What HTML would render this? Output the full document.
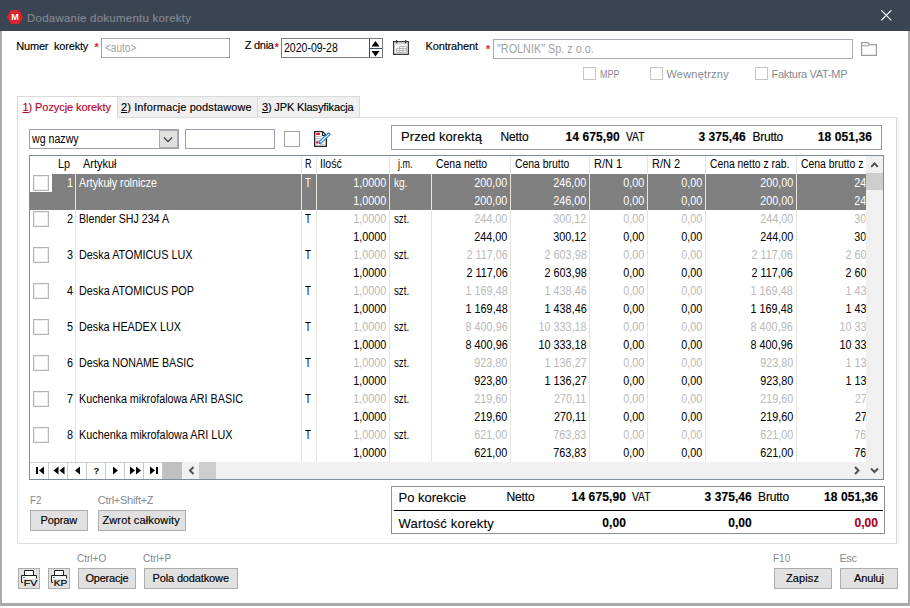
<!DOCTYPE html><html lang="pl"><head><meta charset="utf-8"><title>Dodawanie dokumentu korekty</title><style>*{box-sizing:border-box;margin:0;padding:0}
html,body{width:910px;height:608px;overflow:hidden;background:#fff}
body{position:relative;font-family:"Liberation Sans",sans-serif;font-size:11px;color:#000;line-height:13px}
body>*{position:absolute}
.t{white-space:nowrap;font-size:11px;line-height:13px;z-index:3;-webkit-text-stroke:0.15px currentColor}
.gt{font-size:12.5px;line-height:14px;-webkit-text-stroke:0}
.ttl{font-size:11.5px;line-height:14px;color:#858a92}
.ph{color:#a2a2a2}
.g{color:#848990;-webkit-text-stroke:0}
.big{font-size:13px;line-height:16px;-webkit-text-stroke:0.1px currentColor}
.mid{font-size:12px;line-height:14px}
.bold{font-size:12px;line-height:14px;font-weight:bold}
.red{color:#ac001e}
.w{color:#fff}
.old{color:#b9b9b9}
.old.w{color:#fff}
.clipr{clip-path:inset(0 24.86px 0 0)}
.titlebar{left:0;top:0;width:910px;height:31px;background:#3a4453}
.frame{left:0;top:31px;width:910px;height:575px;border:2px solid #aaa;border-top:0;border-bottom:3px solid #aaa;background:#fff}
.star{color:#f01018;font-weight:bold;font-size:10.5px;line-height:12px;font-family:"Liberation Sans",sans-serif}
.box{background:#fff;border:1px solid #a0a0a0}
.chk{border:1px solid #c4c4c4;background:#fff}
.tab{top:96px;height:21px;border:1px solid #d9d9d9;border-bottom:0;background:#f0f0f0}
.tab.on{background:#fff;height:22px;z-index:2}
.panel{left:17px;top:117px;width:880px;height:427px;border:1px solid #dcdcdc;background:#fff;box-shadow:2px 0 0 #f3f3f3}
.btn{border:1px solid #adadad;background:#e1e1e1;height:21px}
.grid{left:29px;top:155px;width:855px;height:325px;border:1px solid #7f8a9c;background:#fff}
.selbg{background:#808080}
.vs{width:1px;background:#e8e5dc}
.gcb{width:16px;height:16px;border:1px solid #b4b4b4;background:#fff;box-shadow:inset 0 0 0 1px #ececec}
</style></head><body>
<div class="titlebar"></div>
<svg style="left:6px;top:9px" width="18" height="16" viewBox="0 0 18 16"><polygon points="1,8 5,1 13,1 17,8 13,15 5,15" fill="#dc2430"/><text x="9" y="11.300" font-family="Liberation Sans, sans-serif" font-size="9" font-weight="bold" fill="#fff" text-anchor="middle">M</text></svg>
<svg style="left:881px;top:10px" width="11" height="11" viewBox="0 0 11 11"><path d="M0.300 0.300L10.300 10.300M10.300 0.300L0.300 10.300" stroke="#fff" stroke-width="1.100" fill="none"/></svg>
<div class="frame"></div>
<span class="star" style="left:94.400px;top:41.200px">*</span>
<div class="box" style="left:101px;top:38px;width:129px;height:20px;border-color:#a4a4a4"></div>
<span class="star" style="left:274.700px;top:41.300px">*</span>
<div class="box" style="left:281px;top:38px;width:102px;height:20px;border-color:#7a7a7a"></div>
<svg style="left:369px;top:39px" width="14" height="18" viewBox="0 0 14 18"><path d="M0.500 0V18" stroke="#3c4c64"/><path d="M0 9.500H13" stroke="#3c4c64"/><polygon points="6.500,2 10.500,7.500 2.500,7.500" fill="#000"/><polygon points="2.500,12 10.500,12 6.500,17.500" fill="#000"/></svg>
<svg style="left:393px;top:40px" width="17" height="16" viewBox="0 0 17 16"><rect x="0.650" y="1.650" width="14.700" height="12.700" fill="#fff" stroke="#3a3a3a" stroke-width="1.300"/><rect x="1.300" y="2.300" width="13.400" height="2" fill="#cfccc4"/><path d="M3.600 0V3.300M12.600 0V3.300" stroke="#3a3a3a" stroke-width="1.200"/><path d="M6.500 6.500H13.500M3.500 8.500H13.500M3.500 10.500H13.500M3.500 12.500H13.500M3.500 8.500V12.500M6.500 6.500V12.500M10 6.500V12.500M13.500 6.500V12.500" stroke="#b8b8b8" fill="none"/></svg>
<span class="star" style="left:485.900px;top:42.800px">*</span>
<div class="box" style="left:493px;top:39px;width:360px;height:20px;border-color:#abadb6"></div>
<svg style="left:860px;top:41px" width="18" height="16" viewBox="0 0 18 16"><path d="M1.600 14.400V1.600H8L9.500 3.600H16.400V14.400Z" fill="#fff" stroke="#9c9c9c" stroke-width="1.200"/><path d="M1.600 4.700H8.400L9.500 3.600" fill="none" stroke="#9c9c9c" stroke-width="1.100"/></svg>
<i class="chk" style="left:583px;top:67px;width:13px;height:13px"></i>
<i class="chk" style="left:650px;top:67px;width:13px;height:13px"></i>
<i class="chk" style="left:755px;top:67px;width:13px;height:13px"></i>
<div class="panel"></div>
<div class="tab on" style="left:17px;width:101px"></div>
<div class="tab" style="left:117px;width:141px"></div>
<div class="tab" style="left:257px;width:103px"></div>
<span class="t" style="left:22.500px;top:101px;color:#b8001e;letter-spacing:-0.08px"><u>1</u>) Pozycje korekty</span>
<span class="t" style="left:121px;top:101px;letter-spacing:0.1px"><u>2</u>) Informacje podstawowe</span>
<span class="t" style="left:261.900px;top:101px;letter-spacing:-0.13px"><u>3</u>) JPK Klasyfikacja</span>
<div class="box" style="left:29px;top:129px;width:150px;height:20px;border-color:#9ca0a8"></div>
<svg style="left:159px;top:130px" width="19" height="18" viewBox="0 0 19 18"><rect x="0.500" y="0.500" width="18" height="17" fill="#e1e1e1" stroke="#adadad"/><path d="M4.900 7.500L9 11.700L13.100 7.500" stroke="#333" stroke-width="1.100" fill="none"/></svg>
<div class="box" style="left:185px;top:129px;width:90px;height:20px;border-color:#9ca0a8"></div>
<i class="chk" style="left:284px;top:131px;width:16px;height:16px;border-color:#a4a4a4;background:#fdfdfd"></i>
<svg style="left:313px;top:130px" width="19" height="18" viewBox="0 0 19 18"><path d="M1.650 1.650H9.500L13.350 5.500V16.350H1.650Z" fill="#fff" stroke="#222" stroke-width="1.300"/><path d="M9.500 1.650V5.500H13.350" fill="none" stroke="#222" stroke-width="1.100"/><rect x="3" y="3" width="4" height="2" fill="#e8202a"/><rect x="3" y="11.300" width="2.600" height="2.200" fill="#e8202a"/><path d="M3 6.500H8M3 8.500H8M3 10H6M3.500 14.800H5M6.500 14.500H11.500" stroke="#c4c4c4" fill="none"/><path d="M7.200 12.300L15.700 4.300" stroke="#2a86d6" stroke-width="3.600" stroke-linecap="round"/><path d="M7.600 12L15.400 4.600" stroke="#fff" stroke-width="1.100" stroke-linecap="round"/><path d="M5.800 13.800L6.300 11.600L8 13.300Z" fill="#2a86d6"/></svg>
<div class="box" style="left:391px;top:125px;width:491px;height:25px;border-color:#959aa4"></div>

<div class="grid"></div>
<i class="selbg" style="left:30px;top:174px;width:836px;height:36px"></i>
<i style="left:30px;top:174px;width:22px;height:18px;background:#fff"></i>
<i class="vs" style="left:75px;top:174px;height:288px"></i>
<i class="vs" style="left:301px;top:156px;height:306px"></i>
<i class="vs" style="left:316px;top:156px;height:306px"></i>
<i class="vs" style="left:389px;top:156px;height:306px"></i>
<i class="vs" style="left:431px;top:174px;height:288px"></i>
<i class="vs" style="left:510px;top:156px;height:306px"></i>
<i class="vs" style="left:589px;top:156px;height:306px"></i>
<i class="vs" style="left:647px;top:156px;height:306px"></i>
<i class="vs" style="left:705px;top:156px;height:306px"></i>
<i class="vs" style="left:796px;top:156px;height:306px"></i>
<i class="gcb" style="left:33px;top:175px"></i>
<i class="gcb" style="left:33px;top:211px"></i>
<i class="gcb" style="left:33px;top:247px"></i>
<i class="gcb" style="left:33px;top:283px"></i>
<i class="gcb" style="left:33px;top:319px"></i>
<i class="gcb" style="left:33px;top:355px"></i>
<i class="gcb" style="left:33px;top:391px"></i>
<i class="gcb" style="left:33px;top:427px"></i>
<i style="left:866px;top:156px;width:17px;height:306px;background:#f0f0f0"></i>
<i style="left:866px;top:173px;width:17px;height:17px;background:#cdcdcd"></i>
<svg style="left:866px;top:156px" width="17" height="17" viewBox="0 0 17 17"><path d="M5.200 10.900L8.500 7.400L11.800 10.900" stroke="#505050" stroke-width="2" fill="none"/></svg>
<i style="left:30px;top:462px;width:853px;height:17px;background:#f0f0f0"></i>
<svg style="left:30px;top:462px" width="853" height="17" viewBox="0 0 853 17"><rect x="0" y="0" width="133" height="17" fill="#fff"/><path d="M0 0.500H133" stroke="#d0d0d0"/><path d="M18.5 0V17" stroke="#c8c8c8"/><path d="M37.5 0V17" stroke="#c8c8c8"/><path d="M56.5 0V17" stroke="#c8c8c8"/><path d="M75.5 0V17" stroke="#c8c8c8"/><path d="M94.5 0V17" stroke="#c8c8c8"/><path d="M113.5 0V17" stroke="#c8c8c8"/><path d="M132.5 0V17" stroke="#c8c8c8"/><g fill="#000"><rect x="6" y="5" width="2" height="7"/><polygon points="14,4.500 14,12.500 9,8.500"/><polygon points="28.500,4.500 28.500,12.500 23.500,8.500"/><polygon points="34.500,4.500 34.500,12.500 29.500,8.500"/><polygon points="50,4.500 50,12.500 45,8.500"/><polygon points="83,4.500 83,12.500 88,8.500"/><polygon points="100,4.500 100,12.500 105,8.500"/><polygon points="106,4.500 106,12.500 111,8.500"/><polygon points="120,4.500 120,12.500 125,8.500"/><rect x="126" y="5" width="2" height="7"/></g><text x="66.500" y="12" font-family="Liberation Sans, sans-serif" font-size="9.500" font-weight="bold" text-anchor="middle" fill="#000">?</text><rect x="133" y="0" width="19" height="17" fill="#c0c0c0"/><path d="M163.500 5L160 8.500L163.500 12" stroke="#505050" stroke-width="2" fill="none"/><rect x="169" y="0" width="17" height="17" fill="#cdcdcd"/><path d="M825 5L828.500 8.500L825 12" stroke="#505050" stroke-width="2" fill="none"/><path d="M841 6.500L844.500 10L848 6.500" stroke="#505050" stroke-width="2" fill="none"/></svg>

<div class="btn" style="left:30px;top:510px;width:58px"></div>
<div class="btn" style="left:98px;top:510px;width:88px"></div>
<div class="box" style="left:391px;top:486px;width:494px;height:48px;border-color:#8a909c"></div>
<i style="left:394px;top:510px;width:489px;height:1px;background:#000"></i>
<div class="btn" style="left:18px;top:568px;width:22px"></div>
<div class="btn" style="left:48px;top:568px;width:22px"></div>
<svg style="left:18px;top:568px" width="22" height="21" viewBox="0 0 22 21"><path d="M6.500 7V2.500H15.500V7" stroke="#202020" fill="#fff"/><path d="M5 14.500H3.500V7.500H18.500V10.500" stroke="#202020" fill="none"/><rect x="4" y="8" width="14" height="3" fill="#fff"/><rect x="5" y="9" width="2" height="1" fill="#2a8ae0"/><text x="5.800" y="17.500" stroke="#000" stroke-width="0.220" font-family="Liberation Sans, sans-serif" font-size="9.500" textLength="13.500" lengthAdjust="spacingAndGlyphs" fill="#000">FV</text></svg>
<svg style="left:48px;top:568px" width="22" height="21" viewBox="0 0 22 21"><path d="M6.500 7V2.500H15.500V7" stroke="#202020" fill="#fff"/><path d="M5 14.500H3.500V7.500H18.500V10.500" stroke="#202020" fill="none"/><rect x="4" y="8" width="14" height="3" fill="#fff"/><rect x="5" y="9" width="2" height="1" fill="#2a8ae0"/><text x="5.800" y="17.500" stroke="#000" stroke-width="0.220" font-family="Liberation Sans, sans-serif" font-size="9.500" textLength="13.500" lengthAdjust="spacingAndGlyphs" fill="#000">KP</text></svg>
<div class="btn" style="left:78px;top:568px;width:58px"></div>
<div class="btn" style="left:144px;top:568px;width:94px"></div>
<div class="btn" style="left:774px;top:568px;width:58px"></div>
<div class="btn" style="left:840px;top:568px;width:58px"></div>

<span class="t ttl" style="left:27px;top:11px;letter-spacing:0.234px;">Dodawanie dokumentu korekty</span>
<span class="t " style="left:16.3px;top:40px;letter-spacing:-0.198px;">Numer  korekty</span>
<span class="t " style="left:244.8px;top:39px;letter-spacing:-0.276px;">Z dnia</span>
<span class="t " style="left:425.6px;top:40px;letter-spacing:-0.159px;">Kontrahent</span>
<span class="t gt ph" style="left:104.7px;top:41px;transform:scaleX(0.804);transform-origin:0 0;">&lt;auto&gt;</span>
<span class="t gt" style="left:284.4px;top:41px;transform:scaleX(0.841);transform-origin:0 0;">2020-09-28</span>
<span class="t gt ph" style="left:496.6px;top:42px;transform:scaleX(0.866);transform-origin:0 0;">"ROLNIK" Sp. z o.o.</span>
<span class="t g" style="left:599.7px;top:68px;transform:scaleX(0.814);transform-origin:0 0;">MPP</span>
<span class="t g" style="left:666.4px;top:68px;letter-spacing:0.219px;">Wewnętrzny</span>
<span class="t g" style="left:771.6px;top:68px;letter-spacing:-0.290px;">Faktura VAT-MP</span>
<span class="t gt" style="left:31.7px;top:132px;transform:scaleX(0.849);transform-origin:0 0;">wg nazwy</span>
<span class="t big" style="left:401px;top:129px;letter-spacing:0.066px;">Przed korektą</span>
<span class="t mid" style="left:500.5px;top:130px;letter-spacing:-0.147px;">Netto</span>
<span class="t bold" style="left:565.5px;top:130px;letter-spacing:0.101px;">14 675,90</span>
<span class="t mid" style="left:626.3px;top:130px;transform:scaleX(0.858);transform-origin:0 0;">VAT</span>
<span class="t bold" style="left:698.4px;top:130px;letter-spacing:0.083px;">3 375,46</span>
<span class="t mid" style="left:752.5px;top:130px;letter-spacing:-0.263px;">Brutto</span>
<span class="t bold" style="left:817.8px;top:130px;letter-spacing:0.101px;">18 051,36</span>
<span class="t g" style="left:29.7px;top:494px;transform:scaleX(0.895);transform-origin:0 0;">F2</span>
<span class="t g" style="left:97.8px;top:494px;letter-spacing:-0.263px;">Ctrl+Shift+Z</span>
<span class="t " style="left:40.6px;top:514px;letter-spacing:-0.119px;">Popraw</span>
<span class="t " style="left:102.4px;top:514px;letter-spacing:0.151px;">Zwrot całkowity</span>
<span class="t big" style="left:398.5px;top:490px;letter-spacing:-0.012px;">Po korekcie</span>
<span class="t mid" style="left:506.5px;top:490px;letter-spacing:-0.147px;">Netto</span>
<span class="t bold" style="left:571.6px;top:490px;letter-spacing:0.114px;">14 675,90</span>
<span class="t mid" style="left:631.9px;top:490px;transform:scaleX(0.858);transform-origin:0 0;">VAT</span>
<span class="t bold" style="left:704.6px;top:490px;letter-spacing:0.054px;">3 375,46</span>
<span class="t mid" style="left:758.1px;top:490px;letter-spacing:-0.183px;">Brutto</span>
<span class="t bold" style="left:824px;top:490px;letter-spacing:0.076px;">18 051,36</span>
<span class="t big" style="left:398.5px;top:516px;letter-spacing:0.185px;">Wartość korekty</span>
<span class="t bold" style="left:602.2px;top:516px;letter-spacing:0.114px;">0,00</span>
<span class="t bold" style="left:728.3px;top:516px;letter-spacing:0.014px;">0,00</span>
<span class="t bold red" style="left:854.5px;top:516px;letter-spacing:0.047px;">0,00</span>
<span class="t g" style="left:77.4px;top:552px;transform:scaleX(0.910);transform-origin:0 0;">Ctrl+O</span>
<span class="t g" style="left:143.2px;top:552px;transform:scaleX(0.913);transform-origin:0 0;">Ctrl+P</span>
<span class="t g" style="left:773.4px;top:552px;transform:scaleX(0.907);transform-origin:0 0;">F10</span>
<span class="t g" style="left:839.4px;top:552px;letter-spacing:-0.372px;">Esc</span>
<span class="t " style="left:85.4px;top:572px;letter-spacing:-0.206px;">Operacje</span>
<span class="t " style="left:152.5px;top:572px;letter-spacing:-0.137px;">Pola dodatkowe</span>
<span class="t " style="left:786px;top:572px;letter-spacing:0.119px;">Zapisz</span>
<span class="t " style="left:854px;top:572px;letter-spacing:-0.116px;">Anuluj</span>
<span class="t gt" style="left:58.2px;top:157px;transform:scaleX(0.863);transform-origin:0 0;">Lp</span>
<span class="t gt" style="left:83px;top:157px;transform:scaleX(0.877);transform-origin:0 0;">Artykuł</span>
<span class="t gt" style="left:304.6px;top:157px;transform:scaleX(0.731);transform-origin:0 0;">R</span>
<span class="t gt" style="left:320.2px;top:157px;transform:scaleX(0.848);transform-origin:0 0;">Ilość</span>
<span class="t gt" style="left:397.5px;top:157px;transform:scaleX(0.720);transform-origin:0 0;">j.m.</span>
<span class="t gt" style="left:435.7px;top:157px;transform:scaleX(0.837);transform-origin:0 0;">Cena netto</span>
<span class="t gt" style="left:514.8px;top:157px;transform:scaleX(0.833);transform-origin:0 0;">Cena brutto</span>
<span class="t gt" style="left:593.7px;top:157px;transform:scaleX(0.879);transform-origin:0 0;">R/N 1</span>
<span class="t gt" style="left:651.9px;top:157px;transform:scaleX(0.879);transform-origin:0 0;">R/N 2</span>
<span class="t gt" style="left:709.5px;top:157px;transform:scaleX(0.827);transform-origin:0 0;">Cena netto z rab.</span>
<span class="t gt" style="left:800.7px;top:157px;transform:scaleX(0.831);transform-origin:0 0;">Cena brutto z</span>
<span class="t gt num w" style="right:837.4px;top:176px;transform:scaleX(0.865);transform-origin:100% 0;">1</span>
<span class="t gt w" style="left:79.3px;top:176px;transform:scaleX(0.857);transform-origin:0 0;">Artykuły rolnicze</span>
<span class="t gt w" style="left:305.2px;top:176px;transform:scaleX(0.785);transform-origin:0 0;">T</span>
<span class="t gt w" style="left:393.5px;top:176px;transform:scaleX(0.815);transform-origin:0 0;">kg.</span>
<span class="t gt num old w" style="right:523.5px;top:176px;transform:scaleX(0.865);transform-origin:100% 0;">1,0000</span>
<span class="t gt num old w" style="right:402.7px;top:176px;transform:scaleX(0.865);transform-origin:100% 0;">200,00</span>
<span class="t gt num old w" style="right:323.7px;top:176px;transform:scaleX(0.865);transform-origin:100% 0;">246,00</span>
<span class="t gt num old w" style="right:265.7px;top:176px;transform:scaleX(0.865);transform-origin:100% 0;">0,00</span>
<span class="t gt num old w" style="right:207.9px;top:176px;transform:scaleX(0.865);transform-origin:100% 0;">0,00</span>
<span class="t gt num old w" style="right:117.2px;top:176px;transform:scaleX(0.865);transform-origin:100% 0;">200,00</span>
<span class="t gt num old w clipr" style="right:22.5px;top:176px;transform:scaleX(0.865);transform-origin:100% 0;">246,00</span>
<span class="t gt num w" style="right:523.5px;top:194px;transform:scaleX(0.865);transform-origin:100% 0;">1,0000</span>
<span class="t gt num w" style="right:402.7px;top:194px;transform:scaleX(0.865);transform-origin:100% 0;">200,00</span>
<span class="t gt num w" style="right:323.7px;top:194px;transform:scaleX(0.865);transform-origin:100% 0;">246,00</span>
<span class="t gt num w" style="right:265.7px;top:194px;transform:scaleX(0.865);transform-origin:100% 0;">0,00</span>
<span class="t gt num w" style="right:207.9px;top:194px;transform:scaleX(0.865);transform-origin:100% 0;">0,00</span>
<span class="t gt num w" style="right:117.2px;top:194px;transform:scaleX(0.865);transform-origin:100% 0;">200,00</span>
<span class="t gt num w clipr" style="right:22.5px;top:194px;transform:scaleX(0.865);transform-origin:100% 0;">246,00</span>
<span class="t gt num" style="right:837.4px;top:212px;transform:scaleX(0.865);transform-origin:100% 0;">2</span>
<span class="t gt" style="left:79.3px;top:212px;transform:scaleX(0.852);transform-origin:0 0;">Blender SHJ 234 A</span>
<span class="t gt" style="left:305.2px;top:212px;transform:scaleX(0.785);transform-origin:0 0;">T</span>
<span class="t gt" style="left:393.5px;top:212px;transform:scaleX(0.776);transform-origin:0 0;">szt.</span>
<span class="t gt num old" style="right:523.5px;top:212px;transform:scaleX(0.865);transform-origin:100% 0;">1,0000</span>
<span class="t gt num old" style="right:402.7px;top:212px;transform:scaleX(0.865);transform-origin:100% 0;">244,00</span>
<span class="t gt num old" style="right:323.7px;top:212px;transform:scaleX(0.865);transform-origin:100% 0;">300,12</span>
<span class="t gt num old" style="right:265.7px;top:212px;transform:scaleX(0.865);transform-origin:100% 0;">0,00</span>
<span class="t gt num old" style="right:207.9px;top:212px;transform:scaleX(0.865);transform-origin:100% 0;">0,00</span>
<span class="t gt num old" style="right:117.2px;top:212px;transform:scaleX(0.865);transform-origin:100% 0;">244,00</span>
<span class="t gt num old clipr" style="right:22.5px;top:212px;transform:scaleX(0.865);transform-origin:100% 0;">300,12</span>
<span class="t gt num" style="right:523.5px;top:230px;transform:scaleX(0.865);transform-origin:100% 0;">1,0000</span>
<span class="t gt num" style="right:402.7px;top:230px;transform:scaleX(0.865);transform-origin:100% 0;">244,00</span>
<span class="t gt num" style="right:323.7px;top:230px;transform:scaleX(0.865);transform-origin:100% 0;">300,12</span>
<span class="t gt num" style="right:265.7px;top:230px;transform:scaleX(0.865);transform-origin:100% 0;">0,00</span>
<span class="t gt num" style="right:207.9px;top:230px;transform:scaleX(0.865);transform-origin:100% 0;">0,00</span>
<span class="t gt num" style="right:117.2px;top:230px;transform:scaleX(0.865);transform-origin:100% 0;">244,00</span>
<span class="t gt num clipr" style="right:22.5px;top:230px;transform:scaleX(0.865);transform-origin:100% 0;">300,12</span>
<span class="t gt num" style="right:837.4px;top:248px;transform:scaleX(0.865);transform-origin:100% 0;">3</span>
<span class="t gt" style="left:79.3px;top:248px;transform:scaleX(0.868);transform-origin:0 0;">Deska ATOMICUS LUX</span>
<span class="t gt" style="left:305.2px;top:248px;transform:scaleX(0.785);transform-origin:0 0;">T</span>
<span class="t gt" style="left:393.5px;top:248px;transform:scaleX(0.776);transform-origin:0 0;">szt.</span>
<span class="t gt num old" style="right:523.5px;top:248px;transform:scaleX(0.865);transform-origin:100% 0;">1,0000</span>
<span class="t gt num old" style="right:402.7px;top:248px;transform:scaleX(0.865);transform-origin:100% 0;">2 117,06</span>
<span class="t gt num old" style="right:323.7px;top:248px;transform:scaleX(0.865);transform-origin:100% 0;">2 603,98</span>
<span class="t gt num old" style="right:265.7px;top:248px;transform:scaleX(0.865);transform-origin:100% 0;">0,00</span>
<span class="t gt num old" style="right:207.9px;top:248px;transform:scaleX(0.865);transform-origin:100% 0;">0,00</span>
<span class="t gt num old" style="right:117.2px;top:248px;transform:scaleX(0.865);transform-origin:100% 0;">2 117,06</span>
<span class="t gt num old clipr" style="right:22.5px;top:248px;transform:scaleX(0.865);transform-origin:100% 0;">2 603,98</span>
<span class="t gt num" style="right:523.5px;top:266px;transform:scaleX(0.865);transform-origin:100% 0;">1,0000</span>
<span class="t gt num" style="right:402.7px;top:266px;transform:scaleX(0.865);transform-origin:100% 0;">2 117,06</span>
<span class="t gt num" style="right:323.7px;top:266px;transform:scaleX(0.865);transform-origin:100% 0;">2 603,98</span>
<span class="t gt num" style="right:265.7px;top:266px;transform:scaleX(0.865);transform-origin:100% 0;">0,00</span>
<span class="t gt num" style="right:207.9px;top:266px;transform:scaleX(0.865);transform-origin:100% 0;">0,00</span>
<span class="t gt num" style="right:117.2px;top:266px;transform:scaleX(0.865);transform-origin:100% 0;">2 117,06</span>
<span class="t gt num clipr" style="right:22.5px;top:266px;transform:scaleX(0.865);transform-origin:100% 0;">2 603,98</span>
<span class="t gt num" style="right:837.4px;top:284px;transform:scaleX(0.865);transform-origin:100% 0;">4</span>
<span class="t gt" style="left:79.3px;top:284px;transform:scaleX(0.865);transform-origin:0 0;">Deska ATOMICUS POP</span>
<span class="t gt" style="left:305.2px;top:284px;transform:scaleX(0.785);transform-origin:0 0;">T</span>
<span class="t gt" style="left:393.5px;top:284px;transform:scaleX(0.776);transform-origin:0 0;">szt.</span>
<span class="t gt num old" style="right:523.5px;top:284px;transform:scaleX(0.865);transform-origin:100% 0;">1,0000</span>
<span class="t gt num old" style="right:402.7px;top:284px;transform:scaleX(0.865);transform-origin:100% 0;">1 169,48</span>
<span class="t gt num old" style="right:323.7px;top:284px;transform:scaleX(0.865);transform-origin:100% 0;">1 438,46</span>
<span class="t gt num old" style="right:265.7px;top:284px;transform:scaleX(0.865);transform-origin:100% 0;">0,00</span>
<span class="t gt num old" style="right:207.9px;top:284px;transform:scaleX(0.865);transform-origin:100% 0;">0,00</span>
<span class="t gt num old" style="right:117.2px;top:284px;transform:scaleX(0.865);transform-origin:100% 0;">1 169,48</span>
<span class="t gt num old clipr" style="right:22.5px;top:284px;transform:scaleX(0.865);transform-origin:100% 0;">1 438,46</span>
<span class="t gt num" style="right:523.5px;top:302px;transform:scaleX(0.865);transform-origin:100% 0;">1,0000</span>
<span class="t gt num" style="right:402.7px;top:302px;transform:scaleX(0.865);transform-origin:100% 0;">1 169,48</span>
<span class="t gt num" style="right:323.7px;top:302px;transform:scaleX(0.865);transform-origin:100% 0;">1 438,46</span>
<span class="t gt num" style="right:265.7px;top:302px;transform:scaleX(0.865);transform-origin:100% 0;">0,00</span>
<span class="t gt num" style="right:207.9px;top:302px;transform:scaleX(0.865);transform-origin:100% 0;">0,00</span>
<span class="t gt num" style="right:117.2px;top:302px;transform:scaleX(0.865);transform-origin:100% 0;">1 169,48</span>
<span class="t gt num clipr" style="right:22.5px;top:302px;transform:scaleX(0.865);transform-origin:100% 0;">1 438,46</span>
<span class="t gt num" style="right:837.4px;top:320px;transform:scaleX(0.865);transform-origin:100% 0;">5</span>
<span class="t gt" style="left:79.3px;top:320px;transform:scaleX(0.864);transform-origin:0 0;">Deska HEADEX LUX</span>
<span class="t gt" style="left:305.2px;top:320px;transform:scaleX(0.785);transform-origin:0 0;">T</span>
<span class="t gt" style="left:393.5px;top:320px;transform:scaleX(0.776);transform-origin:0 0;">szt.</span>
<span class="t gt num old" style="right:523.5px;top:320px;transform:scaleX(0.865);transform-origin:100% 0;">1,0000</span>
<span class="t gt num old" style="right:402.7px;top:320px;transform:scaleX(0.865);transform-origin:100% 0;">8 400,96</span>
<span class="t gt num old" style="right:323.7px;top:320px;transform:scaleX(0.865);transform-origin:100% 0;">10 333,18</span>
<span class="t gt num old" style="right:265.7px;top:320px;transform:scaleX(0.865);transform-origin:100% 0;">0,00</span>
<span class="t gt num old" style="right:207.9px;top:320px;transform:scaleX(0.865);transform-origin:100% 0;">0,00</span>
<span class="t gt num old" style="right:117.2px;top:320px;transform:scaleX(0.865);transform-origin:100% 0;">8 400,96</span>
<span class="t gt num old clipr" style="right:22.5px;top:320px;transform:scaleX(0.865);transform-origin:100% 0;">10 333,18</span>
<span class="t gt num" style="right:523.5px;top:338px;transform:scaleX(0.865);transform-origin:100% 0;">1,0000</span>
<span class="t gt num" style="right:402.7px;top:338px;transform:scaleX(0.865);transform-origin:100% 0;">8 400,96</span>
<span class="t gt num" style="right:323.7px;top:338px;transform:scaleX(0.865);transform-origin:100% 0;">10 333,18</span>
<span class="t gt num" style="right:265.7px;top:338px;transform:scaleX(0.865);transform-origin:100% 0;">0,00</span>
<span class="t gt num" style="right:207.9px;top:338px;transform:scaleX(0.865);transform-origin:100% 0;">0,00</span>
<span class="t gt num" style="right:117.2px;top:338px;transform:scaleX(0.865);transform-origin:100% 0;">8 400,96</span>
<span class="t gt num clipr" style="right:22.5px;top:338px;transform:scaleX(0.865);transform-origin:100% 0;">10 333,18</span>
<span class="t gt num" style="right:837.4px;top:356px;transform:scaleX(0.865);transform-origin:100% 0;">6</span>
<span class="t gt" style="left:79.3px;top:356px;transform:scaleX(0.853);transform-origin:0 0;">Deska NONAME BASIC</span>
<span class="t gt" style="left:305.2px;top:356px;transform:scaleX(0.785);transform-origin:0 0;">T</span>
<span class="t gt" style="left:393.5px;top:356px;transform:scaleX(0.776);transform-origin:0 0;">szt.</span>
<span class="t gt num old" style="right:523.5px;top:356px;transform:scaleX(0.865);transform-origin:100% 0;">1,0000</span>
<span class="t gt num old" style="right:402.7px;top:356px;transform:scaleX(0.865);transform-origin:100% 0;">923,80</span>
<span class="t gt num old" style="right:323.7px;top:356px;transform:scaleX(0.865);transform-origin:100% 0;">1 136,27</span>
<span class="t gt num old" style="right:265.7px;top:356px;transform:scaleX(0.865);transform-origin:100% 0;">0,00</span>
<span class="t gt num old" style="right:207.9px;top:356px;transform:scaleX(0.865);transform-origin:100% 0;">0,00</span>
<span class="t gt num old" style="right:117.2px;top:356px;transform:scaleX(0.865);transform-origin:100% 0;">923,80</span>
<span class="t gt num old clipr" style="right:22.5px;top:356px;transform:scaleX(0.865);transform-origin:100% 0;">1 136,27</span>
<span class="t gt num" style="right:523.5px;top:374px;transform:scaleX(0.865);transform-origin:100% 0;">1,0000</span>
<span class="t gt num" style="right:402.7px;top:374px;transform:scaleX(0.865);transform-origin:100% 0;">923,80</span>
<span class="t gt num" style="right:323.7px;top:374px;transform:scaleX(0.865);transform-origin:100% 0;">1 136,27</span>
<span class="t gt num" style="right:265.7px;top:374px;transform:scaleX(0.865);transform-origin:100% 0;">0,00</span>
<span class="t gt num" style="right:207.9px;top:374px;transform:scaleX(0.865);transform-origin:100% 0;">0,00</span>
<span class="t gt num" style="right:117.2px;top:374px;transform:scaleX(0.865);transform-origin:100% 0;">923,80</span>
<span class="t gt num clipr" style="right:22.5px;top:374px;transform:scaleX(0.865);transform-origin:100% 0;">1 136,27</span>
<span class="t gt num" style="right:837.4px;top:392px;transform:scaleX(0.865);transform-origin:100% 0;">7</span>
<span class="t gt" style="left:79.3px;top:392px;transform:scaleX(0.861);transform-origin:0 0;">Kuchenka mikrofalowa ARI BASIC</span>
<span class="t gt" style="left:305.2px;top:392px;transform:scaleX(0.785);transform-origin:0 0;">T</span>
<span class="t gt" style="left:393.5px;top:392px;transform:scaleX(0.776);transform-origin:0 0;">szt.</span>
<span class="t gt num old" style="right:523.5px;top:392px;transform:scaleX(0.865);transform-origin:100% 0;">1,0000</span>
<span class="t gt num old" style="right:402.7px;top:392px;transform:scaleX(0.865);transform-origin:100% 0;">219,60</span>
<span class="t gt num old" style="right:323.7px;top:392px;transform:scaleX(0.865);transform-origin:100% 0;">270,11</span>
<span class="t gt num old" style="right:265.7px;top:392px;transform:scaleX(0.865);transform-origin:100% 0;">0,00</span>
<span class="t gt num old" style="right:207.9px;top:392px;transform:scaleX(0.865);transform-origin:100% 0;">0,00</span>
<span class="t gt num old" style="right:117.2px;top:392px;transform:scaleX(0.865);transform-origin:100% 0;">219,60</span>
<span class="t gt num old clipr" style="right:22.5px;top:392px;transform:scaleX(0.865);transform-origin:100% 0;">270,11</span>
<span class="t gt num" style="right:523.5px;top:410px;transform:scaleX(0.865);transform-origin:100% 0;">1,0000</span>
<span class="t gt num" style="right:402.7px;top:410px;transform:scaleX(0.865);transform-origin:100% 0;">219,60</span>
<span class="t gt num" style="right:323.7px;top:410px;transform:scaleX(0.865);transform-origin:100% 0;">270,11</span>
<span class="t gt num" style="right:265.7px;top:410px;transform:scaleX(0.865);transform-origin:100% 0;">0,00</span>
<span class="t gt num" style="right:207.9px;top:410px;transform:scaleX(0.865);transform-origin:100% 0;">0,00</span>
<span class="t gt num" style="right:117.2px;top:410px;transform:scaleX(0.865);transform-origin:100% 0;">219,60</span>
<span class="t gt num clipr" style="right:22.5px;top:410px;transform:scaleX(0.865);transform-origin:100% 0;">270,11</span>
<span class="t gt num" style="right:837.4px;top:428px;transform:scaleX(0.865);transform-origin:100% 0;">8</span>
<span class="t gt" style="left:79.3px;top:428px;transform:scaleX(0.866);transform-origin:0 0;">Kuchenka mikrofalowa ARI LUX</span>
<span class="t gt" style="left:305.2px;top:428px;transform:scaleX(0.785);transform-origin:0 0;">T</span>
<span class="t gt" style="left:393.5px;top:428px;transform:scaleX(0.776);transform-origin:0 0;">szt.</span>
<span class="t gt num old" style="right:523.5px;top:428px;transform:scaleX(0.865);transform-origin:100% 0;">1,0000</span>
<span class="t gt num old" style="right:402.7px;top:428px;transform:scaleX(0.865);transform-origin:100% 0;">621,00</span>
<span class="t gt num old" style="right:323.7px;top:428px;transform:scaleX(0.865);transform-origin:100% 0;">763,83</span>
<span class="t gt num old" style="right:265.7px;top:428px;transform:scaleX(0.865);transform-origin:100% 0;">0,00</span>
<span class="t gt num old" style="right:207.9px;top:428px;transform:scaleX(0.865);transform-origin:100% 0;">0,00</span>
<span class="t gt num old" style="right:117.2px;top:428px;transform:scaleX(0.865);transform-origin:100% 0;">621,00</span>
<span class="t gt num old clipr" style="right:22.5px;top:428px;transform:scaleX(0.865);transform-origin:100% 0;">763,83</span>
<span class="t gt num" style="right:523.5px;top:446px;transform:scaleX(0.865);transform-origin:100% 0;">1,0000</span>
<span class="t gt num" style="right:402.7px;top:446px;transform:scaleX(0.865);transform-origin:100% 0;">621,00</span>
<span class="t gt num" style="right:323.7px;top:446px;transform:scaleX(0.865);transform-origin:100% 0;">763,83</span>
<span class="t gt num" style="right:265.7px;top:446px;transform:scaleX(0.865);transform-origin:100% 0;">0,00</span>
<span class="t gt num" style="right:207.9px;top:446px;transform:scaleX(0.865);transform-origin:100% 0;">0,00</span>
<span class="t gt num" style="right:117.2px;top:446px;transform:scaleX(0.865);transform-origin:100% 0;">621,00</span>
<span class="t gt num clipr" style="right:22.5px;top:446px;transform:scaleX(0.865);transform-origin:100% 0;">763,83</span>

</body></html>
